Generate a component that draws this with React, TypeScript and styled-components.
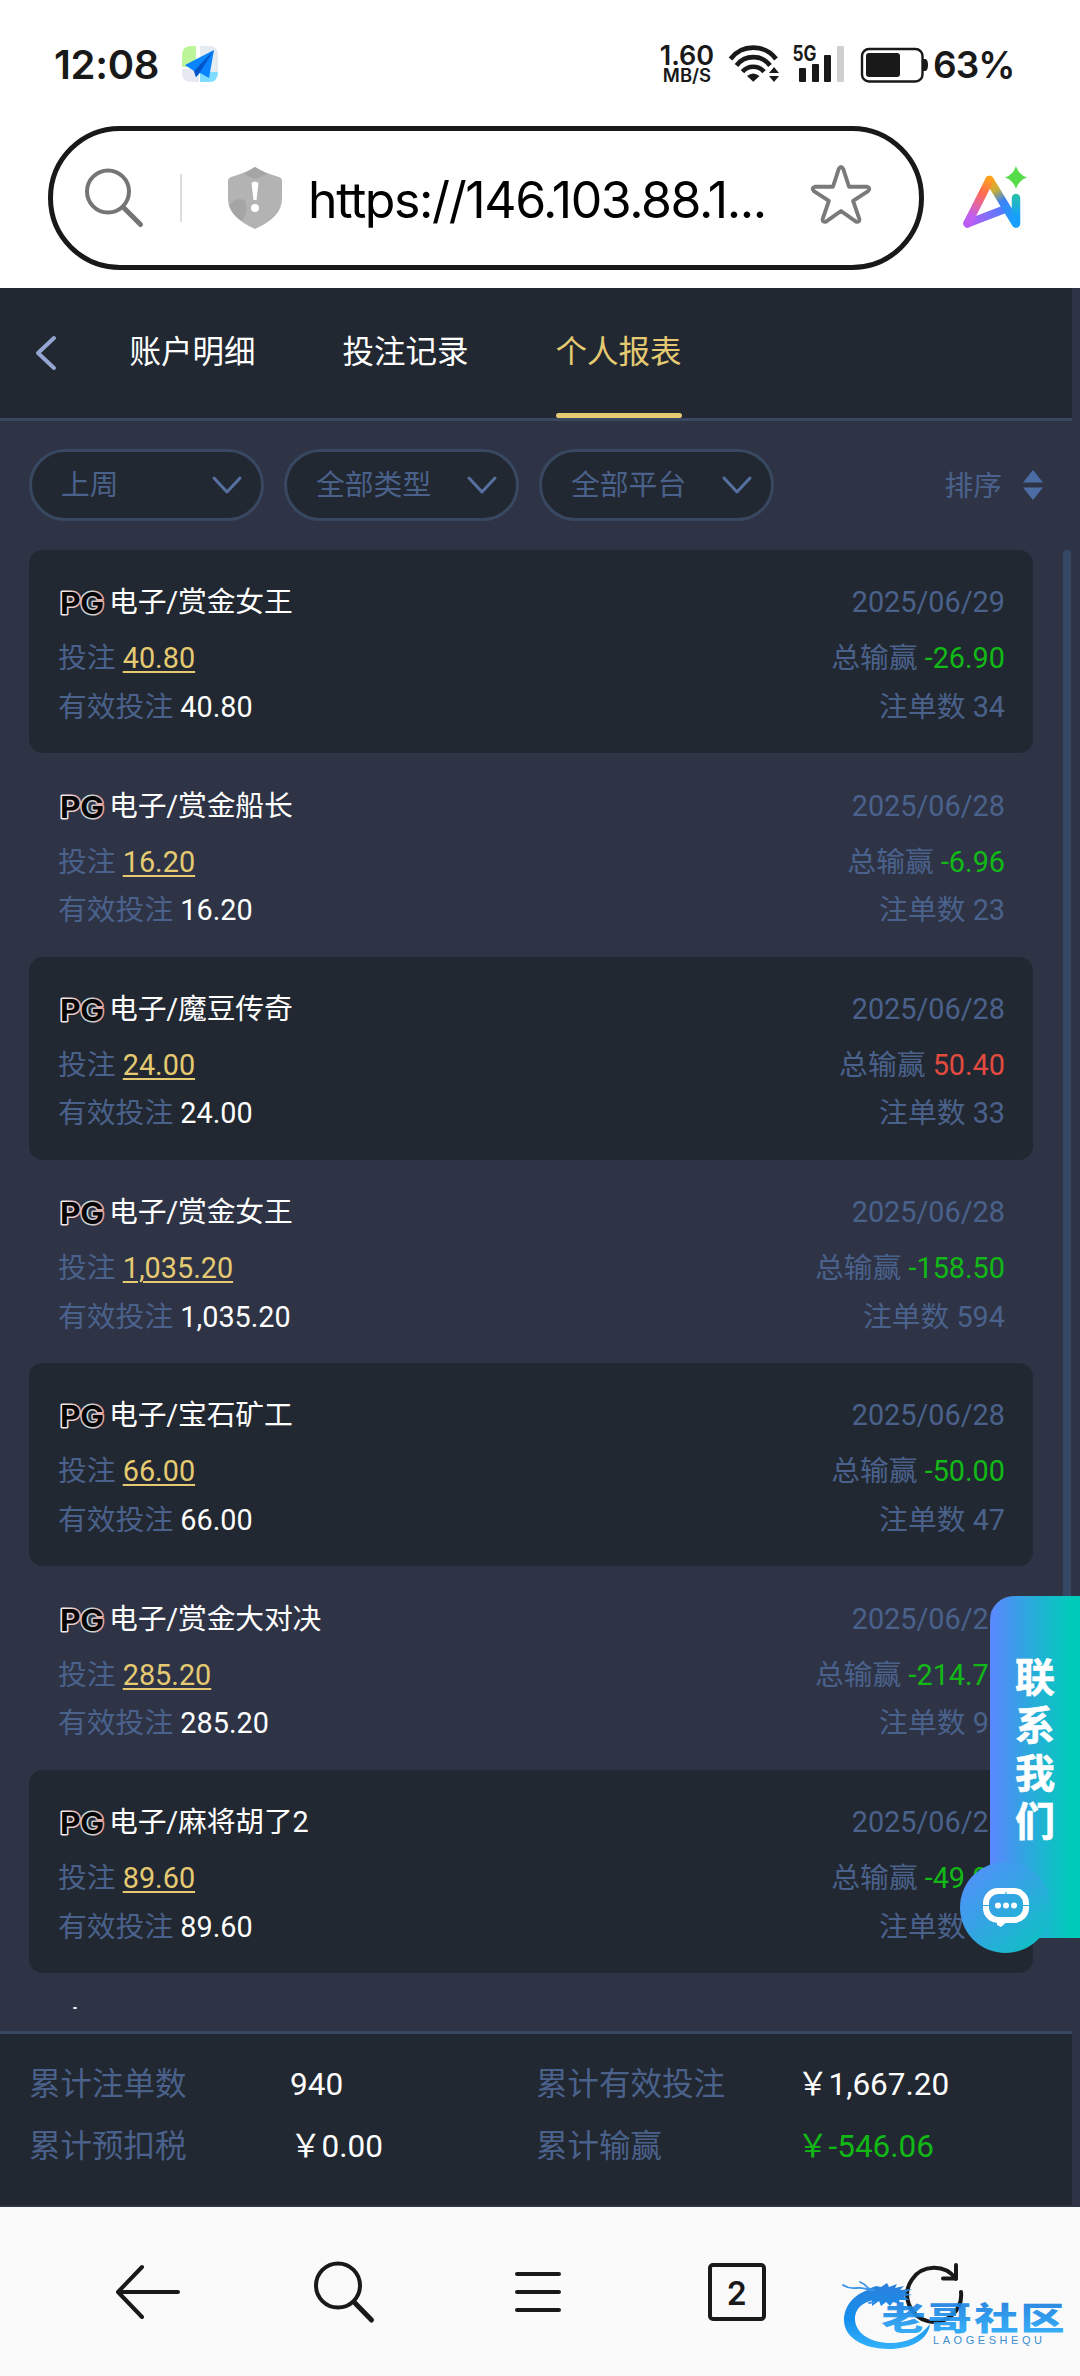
import React from "react";
import styled, { createGlobalStyle } from "styled-components";

const color = {
  page: "#2e3446",
  panel: "#222831",
  line: "#384860",
  label: "#4a618b",
  gold: "#e5ca72",
  green: "#12b916",
  red: "#e34a40",
  ink: "#191919",
};

const GlobalStyle = createGlobalStyle`
  * { box-sizing: border-box; }
  body { margin: 0; background: ${color.page}; }
  svg { overflow: visible; flex: none; }
  button { border: 0; padding: 0; margin: 0; background: none; font: inherit; color: inherit; }
`;

const Screen = styled.div`
  position: relative;
  display: flex;
  flex-direction: column;
  width: 1080px;
  height: 2376px;
  overflow: hidden;
  background: ${color.page};
  font-family: Roboto, "Noto Sans CJK SC", sans-serif;
  font-size: 28.8px;
  color: #fff;
`;

/* ---------- status bar ---------- */

const StatusBar = styled.div`
  display: flex;
  align-items: center;
  height: 126px;
  padding: 2px 69px 0 54px;
  background: #fff;
  color: ${color.ink};
  font-family: Inter, sans-serif;
  white-space: nowrap;
`;

const Clock = styled.div`
  width: 127px;
  font-size: 40px;
  font-weight: 600;
  letter-spacing: -0.3px;
`;

const StatusRight = styled.div`
  display: flex;
  align-items: center;
  margin-left: auto;
`;

const Speed = styled.div`
  display: flex;
  flex-direction: column;
  align-items: center;
  width: 56px;
  margin-right: 13px;
  font-weight: 600;
`;

const SpeedValue = styled.span`
  font-size: 27px;
  line-height: 22px;
`;

const SpeedUnit = styled.span`
  font-size: 18.5px;
  line-height: 16px;
`;

const Percent = styled.div`
  width: 78px;
  margin-left: 5px;
  font-size: 37px;
  font-weight: 600;
  letter-spacing: -1px;
`;

/* ---------- address bar ---------- */

const AddressRow = styled.div`
  display: flex;
  height: 162px;
  padding-left: 48px;
  background: #fff;
`;

const AddressField = styled.div`
  display: flex;
  align-items: center;
  width: 876px;
  height: 144px;
  padding: 0 47px 0 32px;
  border: 5px solid ${color.ink};
  border-radius: 72px;
`;

const Divider = styled.span`
  width: 2px;
  height: 48px;
  margin: 0 46px 0 37px;
  background: #ddd;
`;

const Url = styled.span`
  flex: 1;
  margin-left: 26px;
  padding-top: 3px;
  color: #000;
  font-family: Inter, sans-serif;
  font-size: 50px;
  font-weight: 400;
  letter-spacing: -1.4px;
  white-space: nowrap;
`;

const AiButton = styled.button`
  display: flex;
  margin: 40px 0 0 38px;
`;

/* ---------- site header ---------- */

const Header = styled.header`
  display: flex;
  align-items: stretch;
  width: 1072px;
  height: 133px;
  padding-left: 33px;
  border-bottom: 3px solid ${color.line};
  background: ${color.panel};
`;

const BackButton = styled.button`
  display: flex;
  align-items: center;
  width: 96px;
  padding-bottom: 1px;
`;

const Tab = styled.button<{ $active?: boolean }>`
  display: flex;
  flex-direction: column;
  align-items: center;
  justify-content: space-between;
  width: 127px;
  margin-right: 86px;
  font-size: 31.5px;
  line-height: 129px;
  white-space: nowrap;
  color: ${(p) => (p.$active ? color.gold : "#fff")};

  &::after {
    content: "";
    width: 126px;
    height: 5px;
    margin-top: -4px;
    flex: none;
    border-radius: 3px;
    background: ${(p) => (p.$active ? color.gold : "transparent")};
  }
`;

/* ---------- filters ---------- */

const Filters = styled.div`
  display: flex;
  align-items: center;
  gap: 20px;
  height: 129px;
  padding: 0 37px 2px 29px;
  color: ${color.label};
`;

const Select = styled.button`
  display: flex;
  align-items: center;
  justify-content: space-between;
  width: 235px;
  height: 72px;
  padding: 0 18px 0 29px;
  border: 3px solid ${color.line};
  border-radius: 36px;
  background: ${color.panel};
  line-height: 66px;
`;

const Sort = styled.button`
  display: flex;
  align-items: center;
  gap: 21px;
  margin-left: auto;
`;

const SortLabel = styled.span`
  padding-bottom: 3px;
`;

/* ---------- records ---------- */

const ListArea = styled.div`
  display: flex;
  justify-content: space-between;
  height: 1481px;
  padding: 0 9px 22px 29px;
`;

const List = styled.div`
  width: 1004px;
  overflow: hidden;
`;

const ScrollThumb = styled.div`
  width: 8px;
  height: 1250px;
  border-radius: 4px;
  background: #344866;
`;

const Card = styled.article<{ $dark: boolean }>`
  height: 203.3px;
  padding: 28px 28px 0 29px;
  border-radius: 14px;
  background: ${(p) => (p.$dark ? color.panel : "transparent")};
`;

const Line = styled.div<{ $gap?: number }>`
  display: flex;
  align-items: center;
  justify-content: space-between;
  height: 48.5px;
  margin-bottom: ${(p) => p.$gap ?? 0}px;
  line-height: 48px;
  color: ${color.label};
  white-space: pre;
`;

const Game = styled.div`
  display: flex;
  align-items: center;
  gap: 3px;
  color: #fff;
  letter-spacing: -0.15px;
`;

const Amount = styled.span<{ $tone?: string; $link?: boolean }>`
  color: ${(p) => p.$tone ?? "#fff"};
  text-decoration: ${(p) => (p.$link ? "underline" : "none")};
  text-decoration-thickness: 2px;
  text-underline-offset: 3px;
`;

const NextLogo = styled.div`
  width: 4px;
  height: 2px;
  margin: 34px 0 0 44px;
  border-radius: 1px;
  background: #e8eaf0;
`;

/* ---------- totals ---------- */

const Totals = styled.footer`
  display: grid;
  grid-template-columns: 261px 246px 261px 1fr;
  grid-auto-rows: 61.5px;
  width: 1072px;
  height: 174px;
  padding: 20px 0 0 29px;
  border-top: 3px solid ${color.line};
  background: ${color.panel};
  color: ${color.label};
  font-size: 31.5px;
  line-height: 61px;
`;

/* ---------- browser toolbar ---------- */

const Toolbar = styled.nav`
  display: flex;
  align-items: center;
  justify-content: space-between;
  height: 169px;
  margin-top: 2px;
  padding: 0 115px 0 114px;
  background: #fafafa;
`;

const TabCount = styled.button`
  display: flex;
  align-items: center;
  justify-content: center;
  width: 58px;
  height: 58px;
  padding-top: 3px;
  margin: 0 4px 0 12px;
  border: 4px solid ${color.ink};
  border-radius: 5px;
  color: ${color.ink};
  font-family: Inter, sans-serif;
  font-size: 32px;
  font-weight: 600;
`;

/* ---------- floating contact ---------- */

const Contact = styled.aside`
  position: absolute;
  top: 1596px;
  right: 0;
  width: 90px;
  height: 342px;
  padding: 59px 0 0 25px;
  border-radius: 24px 0 0 30px;
  background: linear-gradient(90deg, #5b88ff 0%, #4397ee 22%, #20b2d4 55%, #00cdb9 92%);
`;

const ContactText = styled.div`
  position: relative;
  z-index: 1;
  width: 40px;
  font-size: 40px;
  font-weight: 700;
  line-height: 48px;
  -webkit-text-stroke: 0.6px #fff;
`;

const ContactBubble = styled.div`
  position: absolute;
  left: -30px;
  bottom: -15px;
  display: flex;
  align-items: center;
  justify-content: center;
  width: 91px;
  height: 91px;
  border-radius: 50%;
  background: linear-gradient(135deg, #5290fa 8%, #34a4e3 45%, #10bfc6 88%);
`;

const Watermark = styled.div`
  position: absolute;
  left: 840px;
  top: 2278px;
  display: flex;
`;

/* ---------- drawings ---------- */

const AppIcon = () => (
  <svg width="38" height="38" viewBox="0 0 38 38">
    <path d="M1 22V10Q1 1 10 1h5v21z" fill="#bdf59a" />
    <path d="M19 1h9q9 0 9 9v17H19z" fill="#e6ebf2" />
    <path d="M1 24h17v13h-7Q1 37 1 28z" fill="#e6e9f2" />
    <path d="M19 27h18q0 10-9 10h-9z" fill="#7fdcff" />
    <path d="M33 5 4 20l9 6 2 6 4-4 9 5z" fill="#0a84ff" />
    <path d="M33 5 13 26l2 6 4-5z" fill="#0054c8" />
  </svg>
);

const Signal = () => (
  <svg width="200" height="40" viewBox="726 44 200 40">
    <g fill="none" stroke={color.ink} strokeWidth="4.6">
      <path d="M728.5 59a28.5 28.5 0 0 1 45.500 0" />
      <path d="M734.500 65.500a21 21 0 0 1 33.500 0" />
      <path d="M740.500 71.800a14 14 0 0 1 21.500 0" />
    </g>
    <path d="M745 76q6-5 12.500 0l-6.200 5.800z" fill={color.ink} />
    <path d="m772 67 5 6h-10zM772 82l5-6h-10z" fill={color.ink} />
    <text x="790.500" y="61" fontFamily="Inter, sans-serif" fontSize="21" fontWeight="700" textLength="24" lengthAdjust="spacingAndGlyphs" fill={color.ink}>
      5G
    </text>
    <g fill={color.ink}>
      <rect x="797" y="68" width="7" height="14" rx="1" />
      <rect x="810" y="64" width="7" height="18" rx="1" />
      <rect x="822" y="55" width="7" height="27" rx="1" />
      <rect x="835" y="46" width="7" height="36" rx="1" fill="#cfcfcf" />
      <rect x="864" y="53" width="34" height="24" rx="3" />
      <path d="M921 59h2.500q2.500 1 2.500 6t-2.500 6H921z" />
    </g>
    <rect x="860" y="49" width="60.500" height="32.500" rx="7" fill="none" stroke={color.ink} strokeWidth="2.400" />
  </svg>
);

const SearchGrey = () => (
  <svg width="58" height="60" viewBox="0 0 58 60" fill="none" stroke="#757575">
    <circle cx="23" cy="23.500" r="21" strokeWidth="4" />
    <path d="m38 39 17.500 17.500" strokeWidth="5" strokeLinecap="round" />
  </svg>
);

const Shield = () => (
  <svg width="54" height="62" viewBox="0 0 54 62">
    <path d="M27 0Q37 6 51 10q3 1 3 4v18q0 18-27 30Q0 50 0 32V14q0-3 3-4Q17 6 27 0z" fill="#b3b3b3" />
    <path d="M1 38q6-8 16-5 4 12-3 21Q4 48 1 38zM16 7l11-7 12 7-12 5z" fill="#a5a5a5" />
    <path d="M23.500 16q3.500-3 7 0l-2 17h-3z" fill="#fff" />
    <circle cx="27" cy="41" r="4" fill="#fff" />
  </svg>
);

const StarIcon = styled.svg`
  margin-bottom: 7px;
  fill: none;
  stroke: #7a7a7a;
  stroke-width: 4;
  stroke-linejoin: round;
`;

const Star = () => (
  <StarIcon width="62" height="60" viewBox="0 0 62 62">
    <path d="M28.700 4q2.300-4 4.600 0l6 18.500 18.700 0q4 1.500 1 4.500L43.500 37l6.500 19q0 3.500-3.500 2.500L31 47.500 15.500 58.500Q12 59.500 12 56l6.500-19L3 27q-3-3 1-4.500l18.700 0z" />
  </StarIcon>
);

const AiLogo = () => (
  <svg width="66" height="66" viewBox="0 0 66 66" fill="none" strokeLinecap="round" strokeLinejoin="round">
    <defs>
      <linearGradient id="leg" x1="30" y1="12" x2="6" y2="60" gradientUnits="userSpaceOnUse">
        <stop offset="0" stopColor="#ffa51a" />
        <stop offset="0.350" stopColor="#ff6a55" />
        <stop offset="0.800" stopColor="#c160ee" />
        <stop offset="1" stopColor="#b95cf5" />
      </linearGradient>
      <linearGradient id="bar" x1="6" y1="60" x2="44" y2="44" gradientUnits="userSpaceOnUse">
        <stop offset="0" stopColor="#bd5cf4" />
        <stop offset="1" stopColor="#4c7dff" />
      </linearGradient>
      <linearGradient id="side" x1="28" y1="12" x2="54" y2="60" gradientUnits="userSpaceOnUse">
        <stop offset="0" stopColor="#ffa51a" />
        <stop offset="0.250" stopColor="#c5ae3a" />
        <stop offset="0.480" stopColor="#3b82f6" />
        <stop offset="1" stopColor="#16a5ff" />
      </linearGradient>
      <linearGradient id="stem" x1="0" y1="30" x2="0" y2="60" gradientUnits="userSpaceOnUse">
        <stop offset="0" stopColor="#27bfae" />
        <stop offset="0.700" stopColor="#169fff" />
      </linearGradient>
    </defs>
    <path d="M5.500 57.500 42 43.500" stroke="url(#bar)" strokeWidth="8" />
    <path d="M27.500 14 54 57.500" stroke="url(#side)" strokeWidth="8.500" />
    <path d="M54 32v25" stroke="url(#stem)" strokeWidth="8.500" />
    <path d="M27.500 14 5.500 57.500" stroke="url(#leg)" strokeWidth="8.500" />
    <path d="M54 0q2.500 8.500 11 11.500-8.500 3-11 11.500-2.500-8.500-11-11.500 8.500-3 11-11.500z" fill="#57dc4c" />
  </svg>
);

const ChevronLeft = () => (
  <svg width="26" height="38" viewBox="0 0 26 38" fill="none" stroke="#93a5d0" strokeWidth="4" strokeLinecap="round" strokeLinejoin="round">
    <path d="M21 4 5 19l16 15" />
  </svg>
);

const ChevronDown = () => (
  <svg width="32" height="22" viewBox="0 0 32 22" fill="none" stroke="#56719f" strokeWidth="3" strokeLinecap="round" strokeLinejoin="round">
    <path d="m3 4 13 14L29 4" />
  </svg>
);

const SortIcon = () => (
  <svg width="20" height="30" viewBox="0 0 20 30" fill="#4c6da3">
    <path d="m10 0 10 12.500H0zM10 30l10-12.500H0z" />
  </svg>
);

const PgLogo = () => (
  <svg width="48" height="28" viewBox="0 0 48 28">
    <defs>
      <linearGradient id="pgEdge" x1="0" x2="1">
        <stop offset="0" stopColor="#f4f4f4" />
        <stop offset="0.450" stopColor="#e6b8b6" />
        <stop offset="0.600" stopColor="#bfe2ea" />
        <stop offset="1" stopColor="#e9a49c" />
      </linearGradient>
    </defs>
    <text x="2" y="25.500" fontFamily="Inter, sans-serif" fontSize="30" fontWeight="700" textLength="44" lengthAdjust="spacingAndGlyphs" fill="#050505" stroke="url(#pgEdge)" strokeWidth="3" strokeLinejoin="round" paintOrder="stroke">
      PG
    </text>
  </svg>
);

const ChatIcon = () => (
  <svg width="46" height="40" viewBox="0 0 46 40">
    <rect x="3" y="3" width="40" height="29" rx="12" fill="none" stroke="#fff" strokeWidth="6" />
    <path d="M14 32h13q-5 3-9 7l-4-2z" fill="#fff" />
    <path d="M0 17.500h7M39 17.500h7M23 6v-2" stroke="#2fa6df" strokeWidth="1.200" />
    <g fill="#fff">
      <circle cx="15" cy="17.500" r="3" />
      <circle cx="23" cy="17.500" r="3" />
      <circle cx="31" cy="17.500" r="3" />
    </g>
  </svg>
);

const NavIcon = styled.svg`
  display: block;
  fill: none;
  stroke: ${color.ink};
  stroke-width: 4;
  stroke-linecap: round;
  stroke-linejoin: round;
`;

const NavSearch = styled(NavIcon)`
  margin: 0 3px 0 -3px;
`;

const CommunityMark = () => (
  <svg width="230" height="76" viewBox="840 2278 230 76">
    <defs>
      <linearGradient id="wm" x1="0" y1="2284" x2="0" y2="2350" gradientUnits="userSpaceOnUse">
        <stop offset="0" stopColor="#2a80dc" />
        <stop offset="0.550" stopColor="#1590ee" />
        <stop offset="1" stopColor="#35b4fb" />
      </linearGradient>
      <linearGradient id="wmText" x1="0" y1="-27" x2="0" y2="2" gradientUnits="userSpaceOnUse">
        <stop offset="0" stopColor="#1c80e0" />
        <stop offset="1" stopColor="#27a6f6" />
      </linearGradient>
    </defs>
    <g fill="url(#wm)">
      <path d="M876 2288C856 2291 844 2305 844 2320C844 2338 864 2349 889 2349C911 2349 928 2340 930 2324C920 2337 906 2343 891 2343C870 2343 854 2333 855 2317C856 2307 864 2301 879 2299Z" />
      <path d="M868 2289l8-3 5 1 6-4 2 4 8-3-2 4 9-2-4 4 12-1-7 4 7 2-8 1 5 4-10 0 1 4-7-2-3 4-4-4-5 4-2-5-7 5 0-6-9 2z" />
    </g>
    <g fill="none" stroke="#3d94e6" strokeWidth="1.800" strokeLinecap="round">
      <path d="M843 2285q6 4 13 3t16 3" />
      <path d="M860 2282q5 2 8 6l6 2" />
      <path d="M874 2302l-5 1" />
    </g>
    <text transform="translate(881.500 2329.500) scale(1.400 1)" fontFamily="'Noto Sans CJK SC', sans-serif" fontSize="31.500" fontWeight="900" letterSpacing="1.600" fill="url(#wmText)" opacity="0.920">
      老哥社区
    </text>
    <text x="933" y="2343.500" fontFamily="'Liberation Sans', sans-serif" fontSize="11" textLength="109" fill="#3b8fd0">
      LAOGESHEQU
    </text>
  </svg>
);

/* ---------- data ---------- */

interface Entry {
  game: string;
  date: string;
  bet: string;
  result: string;
  count: number;
}

const entries: Entry[] = [
  { game: "赏金女王", date: "2025/06/29", bet: "40.80", result: "-26.90", count: 34 },
  { game: "赏金船长", date: "2025/06/28", bet: "16.20", result: "-6.96", count: 23 },
  { game: "魔豆传奇", date: "2025/06/28", bet: "24.00", result: "50.40", count: 33 },
  { game: "赏金女王", date: "2025/06/28", bet: "1,035.20", result: "-158.50", count: 594 },
  { game: "宝石矿工", date: "2025/06/28", bet: "66.00", result: "-50.00", count: 47 },
  { game: "赏金大对决", date: "2025/06/28", bet: "285.20", result: "-214.70", count: 96 },
  { game: "麻将胡了2", date: "2025/06/28", bet: "89.60", result: "-49.90", count: 56 },
];

const Record = ({ entry, dark }: { entry: Entry; dark: boolean }) => (
  <Card $dark={dark}>
    <Line $gap={7.5}>
      <Game>
        <PgLogo />
        <span>电子/{entry.game}</span>
      </Game>
      <span>{entry.date}</span>
    </Line>
    <Line>
      <span>
        投注 <Amount $tone={color.gold} $link>{entry.bet}</Amount>
      </span>
      <span>
        总输赢 <Amount $tone={entry.result.startsWith("-") ? color.green : color.red}>{entry.result}</Amount>
      </span>
    </Line>
    <Line>
      <span>
        有效投注 <Amount>{entry.bet}</Amount>
      </span>
      <span>注单数 {entry.count}</span>
    </Line>
  </Card>
);

export default function App() {
  return (
    <Screen>
      <GlobalStyle />
      <StatusBar>
        <Clock>12:08</Clock>
        <AppIcon />
        <StatusRight>
          <Speed>
            <SpeedValue>1.60</SpeedValue>
            <SpeedUnit>MB/S</SpeedUnit>
          </Speed>
          <Signal />
          <Percent>63%</Percent>
        </StatusRight>
      </StatusBar>
      <AddressRow>
        <AddressField>
          <SearchGrey />
          <Divider />
          <Shield />
          <Url>https://146.103.88.1...</Url>
          <Star />
        </AddressField>
        <AiButton>
          <AiLogo />
        </AiButton>
      </AddressRow>

      <Header>
        <BackButton>
          <ChevronLeft />
        </BackButton>
        <Tab>账户明细</Tab>
        <Tab>投注记录</Tab>
        <Tab $active>个人报表</Tab>
      </Header>
      <Filters>
        {["上周", "全部类型", "全部平台"].map((label) => (
          <Select key={label}>
            {label}
            <ChevronDown />
          </Select>
        ))}
        <Sort>
          <SortLabel>排序</SortLabel>
          <SortIcon />
        </Sort>
      </Filters>
      <ListArea>
        <List>
          {entries.map((entry, i) => (
            <Record key={i} entry={entry} dark={i % 2 === 0} />
          ))}
          <NextLogo />
        </List>
        <ScrollThumb />
      </ListArea>
      <Totals>
        <span>累计注单数</span>
        <Amount>940</Amount>
        <span>累计有效投注</span>
        <Amount>￥1,667.20</Amount>
        <span>累计预扣税</span>
        <Amount>￥0.00</Amount>
        <span>累计输赢</span>
        <Amount $tone={color.green}>￥-546.06</Amount>
      </Totals>

      <Toolbar>
        <NavIcon width="68" height="60" viewBox="0 0 68 60">
          <path d="M28 5 4 30l24 25M4 30h60" />
        </NavIcon>
        <NavSearch width="64" height="64" viewBox="0 0 64 64">
          <circle cx="26" cy="25.500" r="22" />
          <path d="m42 42 17.500 18" strokeWidth="5" />
        </NavSearch>
        <NavIcon width="50" height="44" viewBox="0 0 50 44">
          <path d="M4 4h42M4 22h42M4 40h42" />
        </NavIcon>
        <TabCount>2</TabCount>
        <NavIcon width="62" height="62" viewBox="0 0 62 62">
          <path d="M53 18A27 27 0 1 0 58 31M53 4v13.500H40" />
        </NavIcon>
      </Toolbar>

      <Contact>
        <ContactBubble>
          <ChatIcon />
        </ContactBubble>
        <ContactText>联系我们</ContactText>
      </Contact>
      <Watermark>
        <CommunityMark />
      </Watermark>
    </Screen>
  );
}
